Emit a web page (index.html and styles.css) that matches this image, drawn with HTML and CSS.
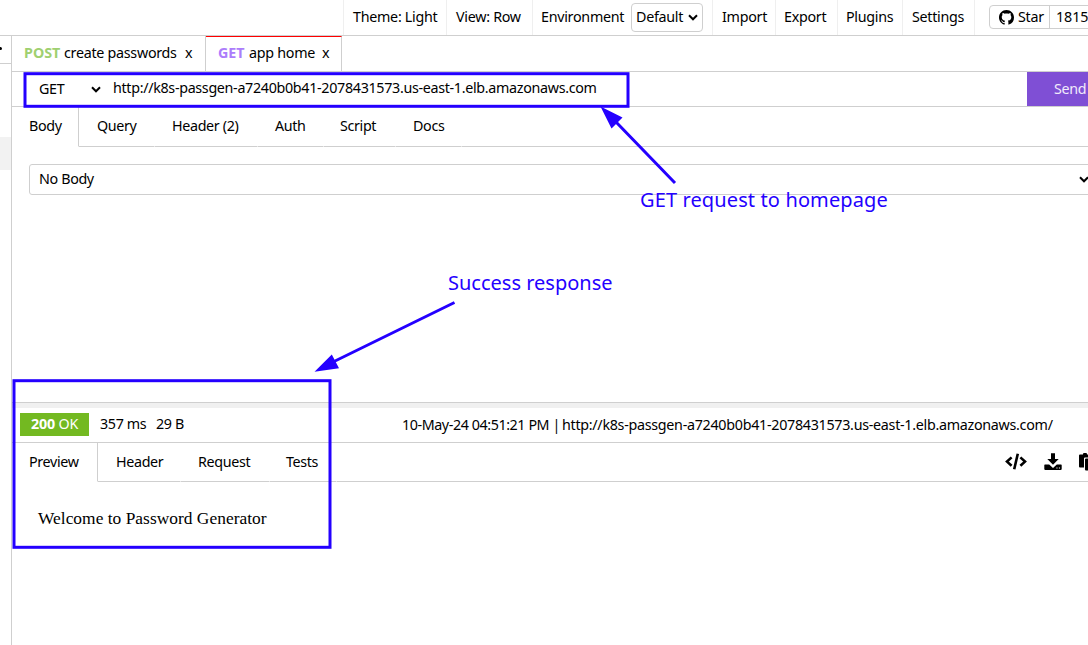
FILE: index.html
```html
<!DOCTYPE html>
<html lang="en">
<head>
<meta charset="utf-8">
<title>API client</title>
<link rel="stylesheet" href="styles.css">
</head>
<body>
<header class="topbar">
  <div class="cell theme"><span class="t-theme">Theme: Light</span></div>
  <div class="cell view"><span class="t-view">View: Row</span></div>
  <div class="cell env"><span class="t-env">Environment</span>
    <div class="env-select"><span class="t-default">Default</span><svg class="chev" viewBox="0 0 10 7"><path d="M1 1.3l4 4 4-4"/></svg></div>
  </div>
  <div class="cell import"><span class="t-import">Import</span></div>
  <div class="cell export"><span class="t-export">Export</span></div>
  <div class="cell plugins"><span class="t-plugins">Plugins</span></div>
  <div class="cell settings"><span class="t-settings">Settings</span></div>
  <div class="github">
    <div class="star"><svg class="octo" viewBox="0 0 16 16"><path d="M8 0C3.58 0 0 3.58 0 8c0 3.54 2.29 6.53 5.47 7.59.4.07.55-.17.55-.38 0-.19-.01-.82-.01-1.49-2.01.37-2.53-.49-2.69-.94-.09-.23-.48-.94-.82-1.13-.28-.15-.68-.52-.01-.53.63-.01 1.08.58 1.23.82.72 1.21 1.87.87 2.33.66.07-.52.28-.87.51-1.07-1.78-.2-3.64-.89-3.64-3.95 0-.87.31-1.59.82-2.15-.08-.2-.36-1.02.08-2.12 0 0 .67-.21 2.2.82.64-.18 1.32-.27 2-.27s1.36.09 2 .27c1.53-1.04 2.2-.82 2.2-.82.44 1.1.16 1.92.08 2.12.51.56.82 1.27.82 2.15 0 3.07-1.87 3.75-3.65 3.95.29.25.54.73.54 1.48 0 1.07-.01 1.93-.01 2.2 0 .21.15.46.55.38A8.01 8.01 0 0 0 16 8c0-4.42-3.58-8-8-8z"/></svg><span class="t-star">Star</span></div>
    <div class="count">1815</div>
  </div>
</header>
<div class="workspace">
  <aside class="sidebar">
    <div class="side-head"><i class="dot"></i></div>
    <div class="side-item"></div>
  </aside>
  <main class="main">
    <div class="tabs">
      <div class="tab first"><b class="post">POST</b><span class="t-create">create passwords</span><span class="x">x</span></div>
      <div class="tab second"><b class="get">GET</b><span class="t-app">app home</span><span class="x">x</span></div>
    </div>
    <div class="url-row">
      <div class="method"><span class="t-get">GET</span><svg class="chev" viewBox="0 0 10 7"><path d="M1 1.3l4 4 4-4"/></svg></div>
      <div class="url">http://k8s-passgen-a7240b0b41-2078431573.us-east-1.elb.amazonaws.com</div>
      <div class="send">Send</div>
    </div>
    <nav class="subtabs request-tabs">
      <div class="sub active w-body">Body</div>
      <div class="sub w-query">Query</div>
      <div class="sub w-header">Header (2)</div>
      <div class="sub w-auth">Auth</div>
      <div class="sub w-script">Script</div>
      <div class="sub w-docs">Docs</div>
      <div class="sub rest"></div>
    </nav>
    <section class="request-body">
      <div class="body-select"><span class="t-nobody">No Body</span><svg class="chev" viewBox="0 0 10 7"><path d="M1 1.3l4 4 4-4"/></svg></div>
    </section>
    <div class="splitter"></div>
    <div class="status">
      <div class="badge"><b>200</b> OK</div>
      <span class="t-ms">357 ms</span>
      <span class="t-size">29 B</span>
      <span class="stamp"><span class="date">10-May-24 04:51:21 PM | </span><span class="link">http://k8s-passgen-a7240b0b41-2078431573.us-east-1.elb.amazonaws.com/</span></span>
    </div>
    <nav class="subtabs response-tabs">
      <div class="sub active w-preview">Preview</div>
      <div class="sub w-rheader">Header</div>
      <div class="sub w-request">Request</div>
      <div class="sub w-tests">Tests</div>
      <div class="sub rest tools">
        <svg width="22" height="18" viewBox="0 0 22 18"><path class="line" d="M6.6 4.4L2 8.6l4.6 4.2M15.4 4.4L20 8.6l-4.6 4.2M12.8 0.8L9.2 16.2"/></svg>
        <svg width="18" height="18" viewBox="0 0 18 18"><path d="M7 0.3h4v5.6h3.7L9 11.8 3.3 5.9H7z"/><path d="M1 11.4h4.2L9 15l3.8-3.6H17q.7 0 .7.7v4q0 .8-.7.8H1q-.7 0-.7-.8v-4q0-.7.7-.7z"/><path class="hole" d="M12.4 14.6h1.1v1h-1.1zM14.9 14.6H16v1h-1.1z"/></svg>
        <svg width="16" height="18" viewBox="0 0 16 18"><path d="M1 1.5h3a2 2 0 0 1 4 0h3q1 0 1 1v2H6q-1 0-1 1v9H1q-1 0-1-1V2.500q0-1 1-1z"/><path d="M7 5.500h5v4h4v7q0 1-1 1H7q-1 0-1-1V6.500q0-1 1-1z"/></svg>
      </div>
    </nav>
    <section class="preview">Welcome to Password Generator</section>
  </main>
</div>
<svg class="annotations" width="1088" height="645" viewBox="0 0 1088 645">
  <rect x="25" y="73.7" width="603" height="32.6"/>
  <rect x="14" y="380.7" width="316" height="166.6"/>
  <path d="M675 183L616 122M454.500 302.500L333 362"/>
  <path class="head" d="M600.5 106.500L622.500 117.500 611.500 128.500zM314.500 371.800L331.800 354.500 339 368.300z"/>
</svg>
<div class="note note-get">GET request to homepage</div>
<div class="note note-ok">Success response</div>
</body>
</html>
```
FILE: styles.css
```css
* { box-sizing: border-box; }
body {
  margin: 0;
  width: 1088px;
  height: 645px;
  overflow: hidden;
  display: flex;
  flex-direction: column;
  background: #fff;
  color: #000;
  font: 14.3px/20px "Noto Sans", "Open Sans", sans-serif;
  letter-spacing: -0.35px;
  white-space: nowrap;
}
svg { display: block; flex: none; }
.chev { width: 10px; height: 7px; fill: none; stroke: #000; stroke-width: 2; }

.topbar { height: 36px; flex: none; border-bottom: 1px solid #cfcfcf; display: flex; padding-left: 343px; letter-spacing: -0.28px; }
.cell { border-left: 1px solid #efefef; padding: 7px 0 0 9px; flex: none; }
.theme { width: 103px; }
.view { width: 86px; }
.env { width: 180px; padding: 3px 0 0 8px; display: flex; }
.env > span { width: 90px; padding-top: 4px; }
.import { width: 63px; }
.export { width: 62px; padding-left: 8px; }
.plugins { width: 65px; padding-left: 8px; }
.settings { width: 73px; border-right: 1px solid #efefef; }
.env-select { width: 72px; height: 29px; border: 1px solid #cfcfcf; border-radius: 4px; display: flex; align-items: center; justify-content: space-between; padding: 0 4px 1px 5px; }
.t-default { margin-left: -1px; }
.github { width: 119px; height: 24px; margin: 5px -20px 0 14px; border: 1px solid #cfcfcf; border-radius: 4px; display: flex; flex: none; }
.star { width: 60px; border-right: 1px solid #cfcfcf; display: flex; align-items: center; gap: 4px; padding-left: 9px; }
.octo { width: 15px; height: 15px; }
.count { padding: 1px 0 0 6px; letter-spacing: -0.1px; }

.workspace { flex: 1; display: flex; min-height: 0; }
.sidebar { width: 12px; border-right: 1px solid #cfcfcf; flex: none; }
.side-head { height: 28px; border-bottom: 1px solid #cfcfcf; padding-top: 11px; }
.dot { display: block; width: 2px; height: 3px; background: #000; border-radius: 0 2px 2px 0; }
.side-item { margin-top: 73px; height: 33px; background: #f2f2f2; }
.main { flex: 1; min-width: 0; display: flex; flex-direction: column; }

.tabs { height: 36px; flex: none; display: flex; border-bottom: 1px solid #cfcfcf; }
.tab { height: 35px; display: flex; align-items: center; padding: 0 0 2px 12px; border-right: 1px solid #cfcfcf; letter-spacing: -0.28px; }
.first { width: 194px; }
.second { width: 136px; border-top: 1px solid #f00; padding-bottom: 3px; }
.post { width: 40px; color: #9fd070; letter-spacing: 0; }
.get { width: 31px; color: #ac7dfb; letter-spacing: 0; }
.t-create { width: 121px; }
.t-app { width: 73px; }

.url-row { height: 35px; flex: none; display: flex; border-bottom: 1px solid #cfcfcf; }
.method { width: 101px; display: flex; align-items: center; padding: 0 12px 0 27px; justify-content: space-between; }
.url { flex: 1; padding-top: 6px; letter-spacing: -0.32px; }
.send { width: 61px; background: #7f4fd5; color: #f1ebfb; padding: 7px 0 0 27px; }

.subtabs { display: flex; flex: none; }
.sub { border-bottom: 1px solid #cfcfcf; border-right: 1px solid transparent; flex: none; padding-top: 9px; padding-left: 17px; }
.sub.active { border-bottom-color: transparent; border-right-color: #cfcfcf; }
.sub.w-query, .sub.w-rheader { padding-left: 18px; }
.sub.rest { flex: 1; border-right: 0; }
.request-tabs { height: 40px; }
.w-body { width: 67px; }
.w-query { width: 76px; }
.w-header { width: 103px; }
.w-auth { width: 66px; }
.sub.w-script { width: 72px; padding-left: 16px; }
.w-docs { width: 66px; }
.request-body { flex: none; height: 255px; padding: 17px 0 0 17px; }
.body-select { width: 1070px; height: 31px; border: 1px solid #cfcfcf; border-radius: 3px; display: flex; align-items: center; padding: 0 0 1px 9px; }
.body-select span { width: 1040px; }

.splitter { flex: none; height: 6px; border-top: 1px solid #cfcfcf; background: #f0f0f0; }
.status { flex: none; height: 35px; border-bottom: 1px solid #cfcfcf; display: flex; padding: 5px 0 0 8px; }
.badge { width: 69px; height: 23px; background: #73b921; color: #fff; padding: 1px 0 0 11px; flex: none; letter-spacing: -0.2px; }
.t-ms { width: 56px; margin: 1px 0 0 11px; flex: none; }
.t-size { width: 246px; margin-top: 1px; flex: none; }
.stamp { margin-top: 2px; display: flex; }
.date { width: 160px; letter-spacing: -0.42px; }
.link { letter-spacing: -0.29px; }

.response-tabs { height: 39px; }
.w-preview { width: 86px; }
.w-rheader { width: 83px; }
.w-request { width: 89px; }
.sub.w-tests { width: 67px; padding-left: 16px; }
.sub.tools { display: flex; gap: 17px; padding: 10px 0 0 668px; overflow: hidden; }
.tools .line { fill: none; stroke: #000; stroke-width: 2.6; }
.tools .hole { fill: #fff; }
.preview { padding: 26px 0 0 26px; font: 17.4px/21px "Liberation Serif", serif; letter-spacing: 0.02px; }

.annotations { position: absolute; left: 0; top: 0; fill: none; stroke: #2400ff; stroke-width: 3; }
.annotations .head { fill: #2400ff; stroke: none; }
.note { position: absolute; color: #2400ff; font-size: 20px; line-height: 28px; letter-spacing: 0; }
.note-get { left: 640px; top: 186px; letter-spacing: 0.12px; }
.note-ok { left: 448px; top: 269px; }
```
